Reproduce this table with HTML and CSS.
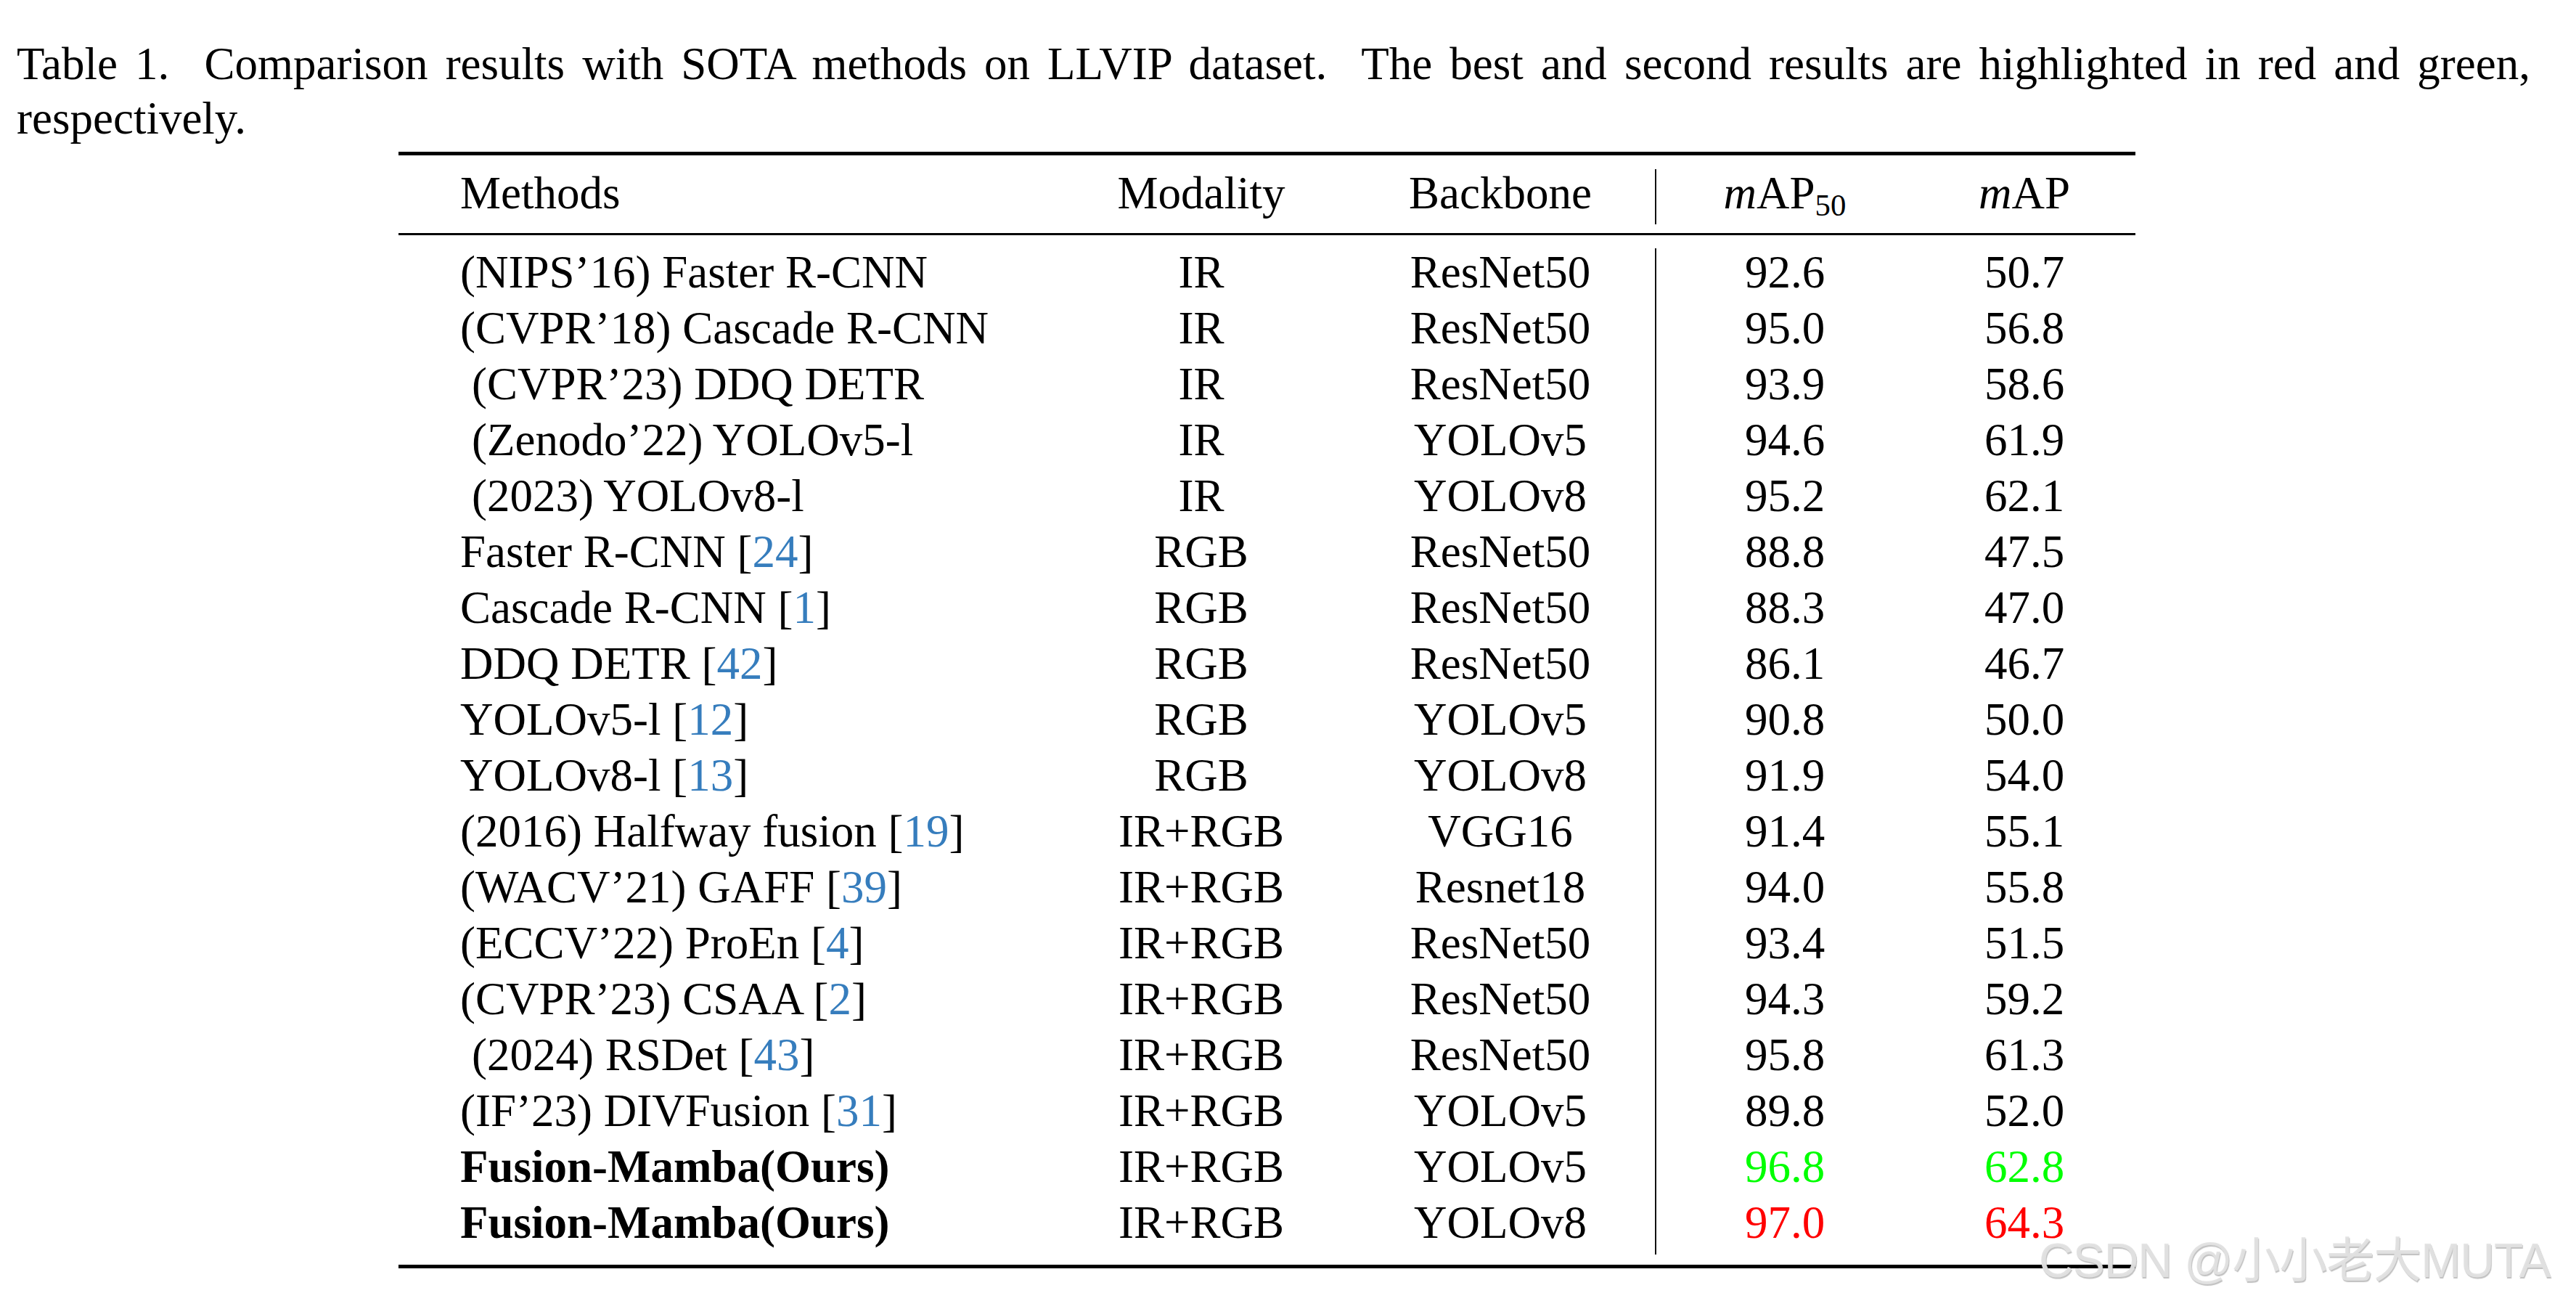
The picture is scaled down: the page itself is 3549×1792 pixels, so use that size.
FILE: index.html
```html
<!DOCTYPE html>
<html lang="en">
<head>
<meta charset="utf-8">
<title>Table 1</title>
<link rel="stylesheet" href="styles.css">
</head>
<body>
<div class="page">
  <p class="caption">Table 1.&nbsp; Comparison results with SOTA methods on LLVIP dataset.&nbsp; The best and second results are highlighted in red and green, respectively.</p>
  <div class="table">
    <div class="rule heavy"></div>
    <div class="head">
      <div class="row hrow">
        <div class="c c1">Methods</div>
        <div class="c c2">Modality</div>
        <div class="c c3">Backbone</div>
        <div class="c c4 vr"><i class="math">m</i>AP<sub class="sub">50</sub></div>
        <div class="c c5"><i class="math">m</i>AP</div>
      </div>
    </div>
    <div class="rule light"></div>
    <div class="body">
      <div class="row"><div class="c c1">(NIPS’16) Faster R-CNN</div><div class="c c2">IR</div><div class="c c3">ResNet50</div><div class="c c4 vr">92.6</div><div class="c c5">50.7</div></div>
      <div class="row"><div class="c c1">(CVPR’18) Cascade R-CNN</div><div class="c c2">IR</div><div class="c c3">ResNet50</div><div class="c c4 vr">95.0</div><div class="c c5">56.8</div></div>
      <div class="row"><div class="c c1 ind">(CVPR’23) DDQ DETR</div><div class="c c2">IR</div><div class="c c3">ResNet50</div><div class="c c4 vr">93.9</div><div class="c c5">58.6</div></div>
      <div class="row"><div class="c c1 ind">(Zenodo’22) YOLOv5-l</div><div class="c c2">IR</div><div class="c c3">YOLOv5</div><div class="c c4 vr">94.6</div><div class="c c5">61.9</div></div>
      <div class="row"><div class="c c1 ind">(2023) YOLOv8-l</div><div class="c c2">IR</div><div class="c c3">YOLOv8</div><div class="c c4 vr">95.2</div><div class="c c5">62.1</div></div>
      <div class="row"><div class="c c1">Faster R-CNN [<span class="cite">24</span>]</div><div class="c c2">RGB</div><div class="c c3">ResNet50</div><div class="c c4 vr">88.8</div><div class="c c5">47.5</div></div>
      <div class="row"><div class="c c1">Cascade R-CNN [<span class="cite">1</span>]</div><div class="c c2">RGB</div><div class="c c3">ResNet50</div><div class="c c4 vr">88.3</div><div class="c c5">47.0</div></div>
      <div class="row"><div class="c c1">DDQ DETR [<span class="cite">42</span>]</div><div class="c c2">RGB</div><div class="c c3">ResNet50</div><div class="c c4 vr">86.1</div><div class="c c5">46.7</div></div>
      <div class="row"><div class="c c1">YOLOv5-l [<span class="cite">12</span>]</div><div class="c c2">RGB</div><div class="c c3">YOLOv5</div><div class="c c4 vr">90.8</div><div class="c c5">50.0</div></div>
      <div class="row"><div class="c c1">YOLOv8-l [<span class="cite">13</span>]</div><div class="c c2">RGB</div><div class="c c3">YOLOv8</div><div class="c c4 vr">91.9</div><div class="c c5">54.0</div></div>
      <div class="row"><div class="c c1">(2016) Halfway fusion [<span class="cite">19</span>]</div><div class="c c2">IR+RGB</div><div class="c c3">VGG16</div><div class="c c4 vr">91.4</div><div class="c c5">55.1</div></div>
      <div class="row"><div class="c c1">(WACV’21) GAFF [<span class="cite">39</span>]</div><div class="c c2">IR+RGB</div><div class="c c3">Resnet18</div><div class="c c4 vr">94.0</div><div class="c c5">55.8</div></div>
      <div class="row"><div class="c c1">(ECCV’22) ProEn [<span class="cite">4</span>]</div><div class="c c2">IR+RGB</div><div class="c c3">ResNet50</div><div class="c c4 vr">93.4</div><div class="c c5">51.5</div></div>
      <div class="row"><div class="c c1">(CVPR’23) CSAA [<span class="cite">2</span>]</div><div class="c c2">IR+RGB</div><div class="c c3">ResNet50</div><div class="c c4 vr">94.3</div><div class="c c5">59.2</div></div>
      <div class="row"><div class="c c1 ind">(2024) RSDet [<span class="cite">43</span>]</div><div class="c c2">IR+RGB</div><div class="c c3">ResNet50</div><div class="c c4 vr">95.8</div><div class="c c5">61.3</div></div>
      <div class="row"><div class="c c1">(IF’23) DIVFusion [<span class="cite">31</span>]</div><div class="c c2">IR+RGB</div><div class="c c3">YOLOv5</div><div class="c c4 vr">89.8</div><div class="c c5">52.0</div></div>
      <div class="row"><div class="c c1 bold">Fusion-Mamba(Ours)</div><div class="c c2">IR+RGB</div><div class="c c3">YOLOv5</div><div class="c c4 vr second">96.8</div><div class="c c5 second">62.8</div></div>
      <div class="row"><div class="c c1 bold">Fusion-Mamba(Ours)</div><div class="c c2">IR+RGB</div><div class="c c3">YOLOv8</div><div class="c c4 vr best">97.0</div><div class="c c5 best">64.3</div></div>
    </div>
    <div class="rule heavy"></div>
  </div>
  <div class="watermark">CSDN @小小老大MUTA</div>
</div>
</body>
</html>
```
FILE: styles.css
```css
html, body {
  margin: 0;
  padding: 0;
  background: #ffffff;
}

.page {
  position: relative;
  width: 3549px;
  height: 1792px;
  box-sizing: border-box;
  padding: 51px 63px 0 23px;
  font-family: "Liberation Serif", "Times New Roman", serif;
  font-size: 63px;
  color: #000000;
}

.caption {
  margin: 0;
  width: 3463px;
  line-height: 75px;
  text-align: justify;
}

.table {
  margin: 8px 0 0 526px;
  width: 2393px;
}

.rule {
  background: #000000;
  width: 100%;
}

.rule.heavy {
  height: 5px;
}

.rule.light {
  height: 3px;
}

.head {
  padding: 19px 0 12px 0;
}

.body {
  padding: 18px 0 14px 0;
}

.row {
  display: grid;
  grid-template-columns: 907px 398px 426px 356px 306px;
  height: 77px;
  line-height: 67px;
  align-items: start;
}

.row.hrow {
  height: 76px;
}

.c {
  height: 100%;
  white-space: nowrap;
  text-align: center;
}

.c1 {
  text-align: left;
  padding-left: 85px;
}

.c1.ind {
  padding-left: 101px;
}

.vr {
  border-left: 2px solid #111111;
  box-sizing: border-box;
}

.bold {
  font-weight: bold;
}

.cite {
  color: #367dbd;
}

.math {
  font-style: italic;
}

.sub {
  font-size: 0.68em;
  line-height: 0;
  vertical-align: -10px;
}

.second {
  color: #00ff00;
}

.best {
  color: #ff0000;
}

.watermark {
  position: absolute;
  left: 2809px;
  top: 1703px;
  font-family: "Liberation Sans", "Noto Sans CJK SC", sans-serif;
  font-size: 66px;
  line-height: 66px;
  letter-spacing: -1px;
  color: rgba(226, 226, 226, 0.95);
  text-shadow: 1px 2px 1px rgba(150, 150, 150, 0.6);
  white-space: nowrap;
}
```
